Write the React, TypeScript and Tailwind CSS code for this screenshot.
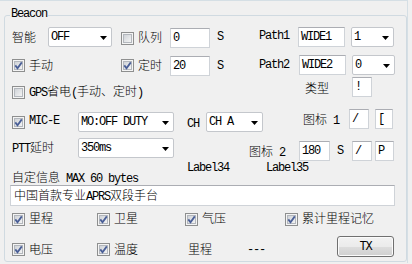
import type { ReactNode } from "react";

const LAT = "font-['Liberation_Mono',monospace] text-[12px] tracking-[-1.2px]";

function Lat({ children }: { children: ReactNode }) {
  return <span className={LAT}>{children}</span>;
}

function CheckBox({ checked, className = "" }: { checked?: boolean; className?: string }) {
  return (
    <svg width="13" height="13" viewBox="0 0 13 13" className={`shrink-0 ${className}`}>
      <defs>
        <linearGradient id="cbFill" x1="0" y1="0" x2="1" y2="1">
          <stop offset="0" stopColor="#cdd1d6" />
          <stop offset="1" stopColor="#f6f6f6" />
        </linearGradient>
      </defs>
      <rect x="0.5" y="0.5" width="12" height="12" fill="#f4f4f4" stroke="#8e8f8f" />
      <rect x="2.5" y="2.5" width="8" height="8" fill="url(#cbFill)" stroke="#b3b7bd" />
      {checked ? (
        <path d="M3.3 6.4 L5.5 9.2 L9.8 3.4" fill="none" stroke="#4a5f97" strokeWidth="1.8" />
      ) : null}
    </svg>
  );
}

function Check({
  label,
  checked,
  className = "",
  boxTop,
  textTop,
}: {
  label: ReactNode;
  checked?: boolean;
  className?: string;
  boxTop: string;
  textTop: string;
}) {
  return (
    <div className={`flex shrink-0 items-start gap-[4px] ${className}`}>
      <CheckBox checked={checked} className={boxTop} />
      <span className={textTop}>{label}</span>
    </div>
  );
}

function TextBox({ className = "", children }: { className?: string; children: ReactNode }) {
  return (
    <div
      className={`flex h-[20px] shrink-0 items-center border border-[#cfd3d8] border-t-[#abadb3] bg-white pl-[2px] ${className}`}
    >
      {children}
    </div>
  );
}

function Combo({ className = "", children }: { className?: string; children: ReactNode }) {
  return (
    <div
      className={`flex h-[20px] shrink-0 items-center justify-between rounded-[2px] border border-[#c4c7cc] bg-white pl-[2px] pr-[4px] ${className}`}
    >
      {children}
      <svg width="7" height="4" viewBox="0 0 7 4" className="mt-[2px]">
        <path d="M0 0h7L3.5 4z" fill="#000" />
      </svg>
    </div>
  );
}

export default function App() {
  return (
    <div className="h-[264px] w-[412px] overflow-hidden bg-[#f0f0f0] font-['Noto_Sans_CJK_SC',sans-serif] text-[12px] font-light leading-[12px] text-black">
      <div className="h-[263px] w-[408px] border-t border-r border-[#d5dfe5]">
        <div className="relative ml-[4px] mt-[14px] h-[247px] w-[403px] rounded-[3px] border border-[#d0dae1] pt-[10px]">
          <span className={`absolute left-[5px] top-[-8px] bg-[#f0f0f0] px-[1px] ${LAT}`}>Beacon</span>

          {/* row 1 */}
          <div className="flex h-[28px] items-start pl-[7px]">
            <span className="mt-[5px] w-[36px] shrink-0">智能</span>
            <div className="w-[73px] shrink-0 pt-[1px]">
              <Combo className="w-[64px]">
                <Lat>OFF</Lat>
              </Combo>
            </div>
            <Check className="w-[49px]" boxTop="mt-[6px]" textTop="mt-[5px]" label="队列" />
            <div className="w-[47px] shrink-0 pt-[2px]">
              <TextBox className="w-[40px]">
                <Lat>0</Lat>
              </TextBox>
            </div>
            <span className={`mt-[5px] w-[42px] shrink-0 ${LAT}`}>S</span>
            <span className={`mt-[4px] w-[39px] shrink-0 ${LAT}`}>Path1</span>
            <div className="w-[53px] shrink-0 pt-[1px]">
              <TextBox className="w-[47px]">
                <Lat>WIDE1</Lat>
              </TextBox>
            </div>
            <div className="pt-[1px]">
              <Combo className="w-[43px]">
                <Lat>1</Lat>
              </Combo>
            </div>
          </div>

          {/* row 2 */}
          <div className="flex h-[23px] items-start pl-[7px]">
            <Check className="w-[109px]" checked boxTop="mt-[5px]" textTop="mt-[5px]" label="手动" />
            <Check className="w-[49px]" checked boxTop="mt-[5px]" textTop="mt-[5px]" label="定时" />
            <div className="w-[47px] shrink-0 pt-[2px]">
              <TextBox className="w-[40px]">
                <Lat>20</Lat>
              </TextBox>
            </div>
            <span className={`mt-[6px] w-[42px] shrink-0 ${LAT}`}>S</span>
            <span className={`mt-[5px] w-[40px] shrink-0 ${LAT}`}>Path2</span>
            <div className="w-[53px] shrink-0 pt-[1px]">
              <TextBox className="w-[47px]">
                <Lat>WIDE2</Lat>
              </TextBox>
            </div>
            <div className="pt-[1px]">
              <Combo className="w-[43px]">
                <Lat>0</Lat>
              </Combo>
            </div>
          </div>

          {/* row 3 */}
          <div className="flex h-[31px] items-start pl-[7px]">
            <Check
              className="w-[293px]"
              boxTop="mt-[9px]"
              textTop="mt-[8px]"
              label={
                <>
                  <Lat>GPS</Lat>省电<Lat>(</Lat>手动、定时<Lat>)</Lat>
                </>
              }
            />
            <span className="mt-[5px] w-[47px] shrink-0">类型</span>
            <TextBox className="w-[20px]">
              <Lat>!</Lat>
            </TextBox>
          </div>

          {/* row 4 */}
          <div className="flex h-[28px] items-start pl-[7px]">
            <div className="flex w-[66px] shrink-0 items-start gap-[4px]">
              <CheckBox checked className="mt-[8px]" />
              <span className={`mt-[7px] ${LAT}`}>MIC-E</span>
            </div>
            <div className="w-[109px] shrink-0 pt-[4px]">
              <Combo className="w-[96px]">
                <Lat>MO:OFF DUTY</Lat>
              </Combo>
            </div>
            <span className={`mt-[10px] w-[19px] shrink-0 ${LAT}`}>CH</span>
            <div className="w-[97px] shrink-0 pt-[4px]">
              <Combo className="w-[57px]">
                <Lat>CH A</Lat>
              </Combo>
            </div>
            <span className="mt-[5px] w-[46px] shrink-0">
              图标<Lat> 1</Lat>
            </span>
            <div className="w-[26px] shrink-0 pt-[1px]">
              <TextBox className="w-[20px]">
                <Lat>/</Lat>
              </TextBox>
            </div>
            <div className="pt-[1px]">
              <TextBox className="w-[18px]">
                <Lat>[</Lat>
              </TextBox>
            </div>
          </div>

          {/* row 5 */}
          <div className="flex h-[26px] items-start pl-[7px]">
            <span className="mt-[5px] w-[66px] shrink-0">
              <Lat>PTT</Lat>延时
            </span>
            <div className="w-[171px] shrink-0 pt-[2px]">
              <Combo className="w-[96px]">
                <Lat>350ms</Lat>
              </Combo>
            </div>
            <span className="mt-[9px] w-[50px] shrink-0">
              图标<Lat> 2</Lat>
            </span>
            <div className="w-[38px] shrink-0 pt-[5px]">
              <TextBox className="w-[31px]">
                <Lat>180</Lat>
              </TextBox>
            </div>
            <span className={`mt-[9px] w-[15px] shrink-0 ${LAT}`}>S</span>
            <div className="w-[23px] shrink-0 pt-[5px]">
              <TextBox className="w-[20px]">
                <Lat>/</Lat>
              </TextBox>
            </div>
            <div className="pt-[5px]">
              <TextBox className="w-[19px]">
                <Lat>P</Lat>
              </TextBox>
            </div>
          </div>

          {/* row 6 */}
          <div className="flex h-[23px] items-start pl-[7px]">
            <span className="mt-[9px] w-[175px] shrink-0">
              自定信息<Lat> MAX 60 bytes</Lat>
            </span>
            <span className={`w-[79px] shrink-0 ${LAT}`}>Label34</span>
            <span className={LAT}>Label35</span>
          </div>

          {/* row 7 */}
          <div className="flex h-[21px] items-start pl-[5px]">
            <TextBox className="!h-[21px] w-[385px]">
              <span className="pl-[1px]">
                中国首款专业<Lat>APRS</Lat>双段手台
              </span>
            </TextBox>
          </div>

          {/* row 8 */}
          <div className="flex h-[28px] items-start pl-[7px]">
            <Check className="w-[85px]" checked boxTop="mt-[7px]" textTop="mt-[6px]" label="里程" />
            <Check className="w-[88px]" checked boxTop="mt-[7px]" textTop="mt-[6px]" label="卫星" />
            <Check className="w-[100px]" checked boxTop="mt-[7px]" textTop="mt-[6px]" label="气压" />
            <Check checked boxTop="mt-[7px]" textTop="mt-[6px]" label="累计里程记忆" />
          </div>

          {/* row 9 */}
          <div className="flex h-[26px] items-start pl-[7px]">
            <Check className="w-[85px]" checked boxTop="mt-[9px]" textTop="mt-[9px]" label="电压" />
            <Check className="w-[91px]" checked boxTop="mt-[9px]" textTop="mt-[9px]" label="温度" />
            <span className="mt-[9px] w-[59px] shrink-0">里程</span>
            <span className={`mt-[10px] w-[90px] shrink-0 ${LAT}`}>---</span>
            <div className="mt-[2px] flex h-[21px] w-[57px] shrink-0 items-center justify-center rounded-[3px] border border-[#707070] bg-[linear-gradient(#f2f2f2_0%,#ebebeb_50%,#dddddd_51%,#cfcfcf_100%)] shadow-[inset_0_0_0_1px_#fbfbfb]">
              <span className={LAT}>TX</span>
            </div>
          </div>
        </div>
      </div>
    </div>
  );
}
